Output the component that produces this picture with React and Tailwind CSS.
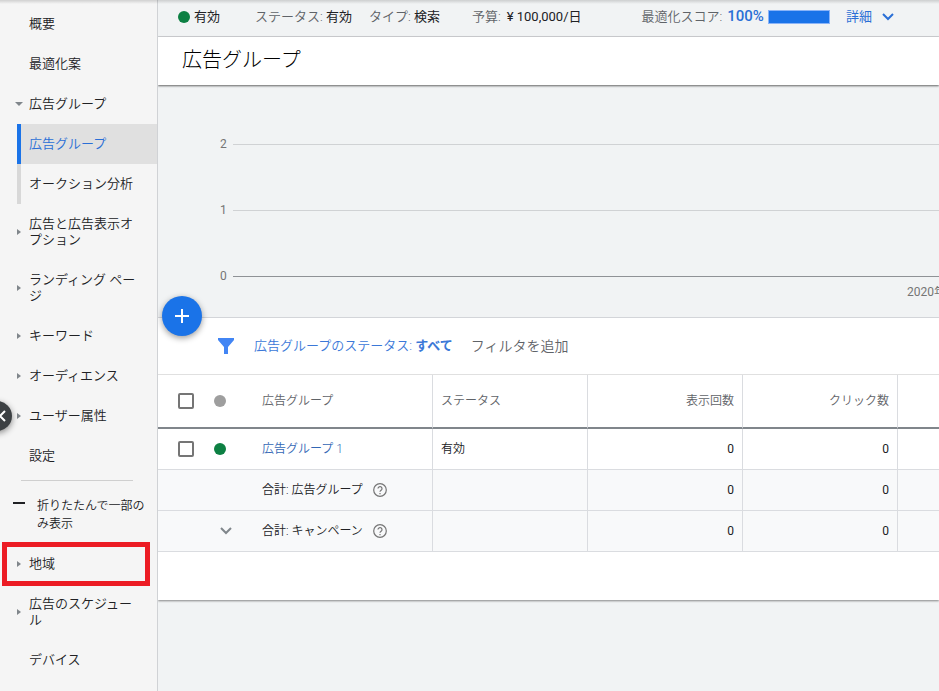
import React from "react";

const navItems = [
  { label: "概要" },
  { label: "最適化案" },
  { label: "広告グループ", arrow: "down" },
  { label: "広告グループ", selected: true },
  { label: "オークション分析", child: true },
  { label: "広告と広告表示オプション", arrow: "right", tall: true },
  { label: "ランディング ページ", arrow: "right", tall: true },
  { label: "キーワード", arrow: "right" },
  { label: "オーディエンス", arrow: "right" },
  { label: "ユーザー属性", arrow: "right" },
  { label: "設定" },
];

const moreItems = [
  { label: "地域", arrow: "right", marked: true },
  { label: "広告のスケジュール", arrow: "right", tall: true },
  { label: "デバイス" },
];

function Marker({ item }) {
  if (item.selected) return <span className="w-1 self-stretch bg-[#1a73e8]" />;
  if (item.child) return <span className="w-1 self-stretch bg-[#d8d8d8]" />;
  return (
    <span className="flex w-1 justify-center">
      {item.arrow === "right" && (
        <svg className="h-2 w-1 shrink-0" viewBox="0 0 4 8" fill="#80868b"><path d="M0 1l4 3-4 3z" /></svg>
      )}
      {item.arrow === "down" && (
        <svg className="h-1 w-2 shrink-0" viewBox="0 0 8 4" fill="#80868b"><path d="M0 0h8L4 4z" /></svg>
      )}
    </span>
  );
}

function NavItem({ item }) {
  return (
    <li className="relative">
      <a
        href="#"
        className={`ml-[17px] flex items-center text-[13px] leading-4 ${item.tall ? "h-14" : "h-10"} ${
          item.selected ? "bg-[#e0e0e0] text-[#2a6fd6]" : "text-[#202124]"
        }`}
      >
        <Marker item={item} />
        <span className="ml-2 w-28">{item.label}</span>
      </a>
      {item.marked && (
        <span className="pointer-events-none absolute -inset-y-0.5 left-0.5 right-[7px] border-[5px] border-[#ec1c24]" />
      )}
    </li>
  );
}

function Sidebar() {
  return (
    <nav className="relative w-[158px] shrink-0 border-r border-[#d0d2d5] bg-[#f5f5f5] pt-1 font-[350]">
      <ul>
        {navItems.map((item, i) => <NavItem key={i} item={item} />)}
      </ul>
      <hr className="ml-[21px] mr-6 mt-1 border-[#cfcfcf]" />
      <button type="button" className="mb-[11px] mt-4 flex w-full pl-[13px] text-left text-xs leading-[18px] text-[#202124]">
        <span className="mr-3 mt-[5px] h-0.5 w-3 shrink-0 bg-[#202124]" />
        <span className="w-28">折りたたんで一部のみ表示</span>
      </button>
      <ul>
        {moreItems.map((item, i) => <NavItem key={i} item={item} />)}
      </ul>
      <button
        type="button"
        aria-label="メニューを閉じる"
        className="absolute -left-[18px] top-[401px] flex h-[30px] w-[30px] items-center justify-end rounded-full bg-[#3c4043] pr-1.5 shadow-[0_2px_6px_rgba(0,0,0,0.45)]"
      >
        <svg className="h-3 w-2" viewBox="0 0 8 12" fill="none" stroke="#fff" strokeWidth="2"><path d="M7 1L2 6l5 5" /></svg>
      </button>
    </nav>
  );
}

function StatusBar() {
  return (
    <div className="flex h-[37px] items-center whitespace-nowrap border-b border-[#d0d2d5] pb-[3px] pl-5 text-[13px] text-[#202124]">
      <span className="mr-1 h-3 w-3 rounded-full bg-[#0d8043]" />
      <span className="mr-[35px]">有効</span>
      <span className="mr-[17px]"><span className="font-[350] text-[#5f6368]">ステータス:</span> 有効</span>
      <span className="mr-8"><span className="font-[350] text-[#5f6368]">タイプ:</span> 検索</span>
      <span className="mr-[60px]"><span className="mr-1.5 font-[350] text-[#5f6368]">予算:</span>¥ 100,000/日</span>
      <span className="mr-[5px] font-[350] text-[#5f6368]">最適化スコア:</span>
      <a href="#" className="mr-1 text-[15px] font-medium text-[#2a6fd6]">100%</a>
      <span className="mr-4 h-3.5 w-[62px] border border-[#8ab4f8] bg-[#1a73e8]" />
      <button type="button" className="flex items-center gap-2.5 text-[#2a6fd6]">
        詳細
        <svg className="h-2 w-3" viewBox="0 0 12 8" fill="none" stroke="#2a6fd6" strokeWidth="2"><path d="M1 1l5 5 5-5" /></svg>
      </button>
    </div>
  );
}

function Chart() {
  return (
    <div className="flex h-[233px] flex-col border-b border-[#dadce0] pt-[49px] text-xs leading-5 text-[#757575]">
      <div className="flex flex-col gap-[46px]">
        {[2, 1, 0].map((n) => (
          <div key={n} className="flex items-center pl-[62px]">
            <span className="w-[13px]">{n}</span>
            <span className={`h-px flex-1 ${n === 0 ? "bg-[#8f9296]" : "bg-[#d0d2d4]"}`} />
          </div>
        ))}
      </div>
      <span className="w-8 self-end overflow-hidden whitespace-nowrap leading-3">2020年</span>
    </div>
  );
}

function FilterBar() {
  return (
    <div className="flex h-[57px] items-center whitespace-nowrap border-b border-[#e0e0e0] pl-[60px] text-[13px] font-[350]">
      <svg className="mr-5 h-4 w-4" viewBox="0 0 16 16" fill="#4285f4"><path d="M0 0h16v2l-6 7v7H6V9L0 2z" /></svg>
      <button type="button" className="mr-[18px] text-[#3b78d8]">
        広告グループのステータス: <span className="font-bold">すべて</span>
      </button>
      <button type="button" className="text-sm text-[#5f6368]">フィルタを追加</button>
    </div>
  );
}

function Check({ label }) {
  return (
    <input
      type="checkbox"
      aria-label={label}
      className="block h-4 w-4 appearance-none rounded-xs border-2 border-[#757575] bg-white"
    />
  );
}

function Help() {
  return (
    <svg className="h-3.5 w-3.5" viewBox="0 0 14 14" fill="none" stroke="#757575" strokeWidth="1.2">
      <circle cx="7" cy="7" r="6.3" />
      <path d="M5 5.6a2 2 0 1 1 3.3 1.5C7.5 7.7 7 8 7 8.8" />
      <path d="M7 9.9v1.3" />
    </svg>
  );
}

const line = "border-r border-[#dadce0]";

function DataTable() {
  return (
    <table className="w-full table-fixed border-separate border-spacing-0 text-left text-xs text-[#202124]">
      <colgroup>
        <col className="w-[46px]" />
        <col className="w-[49px]" />
        <col className="w-[180px]" />
        <col className="w-[155px]" />
        <col className="w-[155px]" />
        <col className="w-[155px]" />
        <col />
      </colgroup>
      <thead className="text-[#5f6368] [&_th]:h-[54px] [&_th]:border-b-2 [&_th]:border-b-[#80868b] [&_th]:font-[350]">
        <tr>
          <th className="pl-5"><Check label="すべて選択" /></th>
          <th className="pl-2.5"><span className="block h-3 w-3 rounded-full bg-[#9e9e9e]" /></th>
          <th className={`pl-[9px] ${line}`}>広告グループ</th>
          <th className={`pl-2 ${line}`}>ステータス</th>
          <th className={`pr-2 text-right ${line}`}>表示回数</th>
          <th className={`pr-2 text-right ${line}`}>クリック数</th>
          <th />
        </tr>
      </thead>
      <tbody className="[&_td]:h-[41px] [&_td]:border-b [&_td]:border-b-[#dadce0]">
        <tr>
          <td className="pl-5"><Check label="広告グループ 1" /></td>
          <td className="pl-2.5"><span className="block h-3 w-3 rounded-full bg-[#0d8043]" /></td>
          <td className={`pl-[9px] font-[350] ${line}`}><a href="#" className="text-[#3367b5]">広告グループ 1</a></td>
          <td className={`pl-2 font-[350] ${line}`}>有効</td>
          <td className={`pr-2 text-right ${line}`}>0</td>
          <td className={`pr-2 text-right ${line}`}>0</td>
          <td />
        </tr>
        {["広告グループ", "キャンペーン"].map((name, i) => (
          <tr key={name} className="bg-[#f8f9fa]">
            <td />
            <td className="pl-4">
              {i === 1 && (
                <button type="button" aria-label="展開" className="block">
                  <svg className="h-2 w-3" viewBox="0 0 12 8" fill="none" stroke="#80868b" strokeWidth="2"><path d="M1 1l5 5 5-5" /></svg>
                </button>
              )}
            </td>
            <td className={`pl-[9px] font-[350] ${line}`}>
              <span className="flex items-center gap-2.5">合計: {name}<Help /></span>
            </td>
            <td className={line} />
            <td className={`pr-2 text-right ${line}`}>0</td>
            <td className={`pr-2 text-right ${line}`}>0</td>
            <td />
          </tr>
        ))}
      </tbody>
    </table>
  );
}

export default function App() {
  return (
    <div className="relative flex min-h-screen overflow-hidden bg-[#f1f3f4] font-['Roboto','Noto_Sans_CJK_JP',sans-serif]">
      <Sidebar />
      <main className="min-w-0 flex-1 overflow-hidden">
        <StatusBar />
        <header className="flex h-12 items-center bg-white pb-0.5 pl-6 shadow-[0_1px_2px_rgba(0,0,0,0.6)]">
          <h1 className="text-xl font-light text-black">広告グループ</h1>
        </header>
        <Chart />
        <section className="relative bg-white pb-12 shadow-[0_1px_2px_rgba(0,0,0,0.45)]">
          <button
            type="button"
            aria-label="広告グループを作成"
            className="absolute -top-[22px] left-1 flex h-10 w-10 items-center justify-center rounded-full bg-[#1a73e8] shadow-[0_2px_6px_rgba(0,0,0,0.4)]"
          >
            <svg className="h-3.5 w-3.5" viewBox="0 0 14 14" stroke="#fff" strokeWidth="2"><path d="M7 0v14M0 7h14" /></svg>
          </button>
          <FilterBar />
          <DataTable />
        </section>
      </main>
      <div className="pointer-events-none absolute inset-x-0 top-0 h-1 bg-linear-to-b from-black/15 to-transparent" />
    </div>
  );
}
